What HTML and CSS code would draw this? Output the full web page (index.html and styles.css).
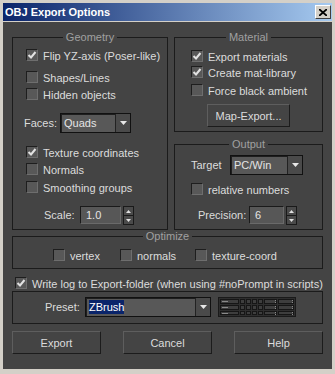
FILE: index.html
```html
<!DOCTYPE html>
<html>
<head>
<meta charset="utf-8">
<link rel="stylesheet" href="styles.css">
</head>
<body>
<div class="window">
  <div class="titlebar">
    <span class="title">OBJ Export Options</span>
    <span class="close"><svg width="8" height="7" viewBox="0 0 8 7"><path d="M0 0 L8 7 M8 0 L0 7" stroke="#000" stroke-width="1.8"/></svg></span>
  </div>
  <div class="client">
    <div class="top">
      <fieldset class="group geometry">
        <legend>Geometry</legend>
        <div class="cb flip"><span class="box on"><svg width="10" height="10" viewBox="0 0 10 10"><path d="M1.5 5 L4 7.5 L8.5 2" fill="none" stroke="#e2e2e2" stroke-width="2"/></svg></span><span class="t">Flip YZ-axis (Poser-like)</span></div>
        <div class="cb shapes"><span class="box"></span><span class="t">Shapes/Lines</span></div>
        <div class="cb hidden"><span class="box"></span><span class="t">Hidden objects</span></div>
        <div class="row faces">
          <span class="lbl faces-lbl">Faces:</span>
          <div class="dd faces-dd"><span class="val">Quads</span><span class="arr"><svg width="7" height="4" viewBox="0 0 7 4"><path d="M0 0 H7 L3.5 4 Z" fill="#e8e8e8"/></svg></span></div>
        </div>
        <div class="cb texture"><span class="box on"><svg width="10" height="10" viewBox="0 0 10 10"><path d="M1.5 5 L4 7.5 L8.5 2" fill="none" stroke="#e2e2e2" stroke-width="2"/></svg></span><span class="t">Texture coordinates</span></div>
        <div class="cb normals"><span class="box"></span><span class="t">Normals</span></div>
        <div class="cb smooth"><span class="box"></span><span class="t">Smoothing groups</span></div>
        <div class="row scale">
          <span class="lbl scale-lbl">Scale:</span>
          <div class="spin"><span class="field scale-field">1.0</span><span class="arrows"><span class="up"><svg width="5" height="3" viewBox="0 0 5 3"><path d="M0 3 H5 L2.5 0 Z" fill="#e0e0e0"/></svg></span><span class="down"><svg width="5" height="3" viewBox="0 0 5 3"><path d="M0 0 H5 L2.5 3 Z" fill="#e0e0e0"/></svg></span></span></div>
        </div>
      </fieldset>
      <div class="rightcol">
        <fieldset class="group material">
          <legend>Material</legend>
          <div class="cb expmat"><span class="box on"><svg width="10" height="10" viewBox="0 0 10 10"><path d="M1.5 5 L4 7.5 L8.5 2" fill="none" stroke="#e2e2e2" stroke-width="2"/></svg></span><span class="t">Export materials</span></div>
          <div class="cb matlib"><span class="box on"><svg width="10" height="10" viewBox="0 0 10 10"><path d="M1.5 5 L4 7.5 L8.5 2" fill="none" stroke="#e2e2e2" stroke-width="2"/></svg></span><span class="t">Create mat-library</span></div>
          <div class="cb force"><span class="box"></span><span class="t">Force black ambient</span></div>
          <div class="btn mapexp">Map-Export...</div>
        </fieldset>
        <fieldset class="group output">
          <legend>Output</legend>
          <div class="row target">
            <span class="lbl target-lbl">Target</span>
            <div class="dd target-dd"><span class="val">PC/Win</span><span class="arr"><svg width="7" height="4" viewBox="0 0 7 4"><path d="M0 0 H7 L3.5 4 Z" fill="#e8e8e8"/></svg></span></div>
          </div>
          <div class="cb relative"><span class="box"></span><span class="t">relative numbers</span></div>
          <div class="row precision">
            <span class="lbl prec-lbl">Precision:</span>
            <div class="spin"><span class="field prec-field">6</span><span class="arrows"><span class="up"><svg width="5" height="3" viewBox="0 0 5 3"><path d="M0 3 H5 L2.5 0 Z" fill="#e0e0e0"/></svg></span><span class="down"><svg width="5" height="3" viewBox="0 0 5 3"><path d="M0 0 H5 L2.5 3 Z" fill="#e0e0e0"/></svg></span></span></div>
          </div>
        </fieldset>
      </div>
    </div>
    <fieldset class="group optimize">
      <legend>Optimize</legend>
      <div class="opt-row">
        <div class="cb o-vertex"><span class="box"></span><span class="t">vertex</span></div>
        <div class="cb o-normals"><span class="box"></span><span class="t">normals</span></div>
        <div class="cb o-tex"><span class="box"></span><span class="t">texture-coord</span></div>
      </div>
    </fieldset>
    <div class="cb writelog"><span class="box on"><svg width="10" height="10" viewBox="0 0 10 10"><path d="M1.5 5 L4 7.5 L8.5 2" fill="none" stroke="#e2e2e2" stroke-width="2"/></svg></span><span class="t">Write log to Export-folder (when using #noPrompt in scripts)</span></div>
    <fieldset class="group preset">
      <div class="row preset-row">
        <span class="lbl preset-lbl">Preset:</span>
        <div class="dd preset-dd"><span class="val"><span class="sel">ZBrush</span></span><span class="arr"><svg width="7" height="4" viewBox="0 0 7 4"><path d="M0 0 H7 L3.5 4 Z" fill="#e8e8e8"/></svg></span></div>
        <svg class="preset-icon" width="78" height="20" viewBox="0 0 78 20">
          <rect x="0.5" y="0.5" width="77" height="19" fill="#2e2e2e" stroke="#1a1a1a"/>
          <g fill="#3e3e3e" stroke="#161616">
            <rect x="2.5" y="2.5" width="18" height="4"/>
            <rect x="2.5" y="8.5" width="18" height="4"/>
            <rect x="2.5" y="14.5" width="18" height="3"/>
            <rect x="22.5" y="2.5" width="4" height="4"/><rect x="28.5" y="2.5" width="4" height="4"/><rect x="34.5" y="2.5" width="4" height="4"/><rect x="40.5" y="2.5" width="4" height="4"/>
            <rect x="22.5" y="8.5" width="4" height="4"/><rect x="28.5" y="8.5" width="4" height="4"/><rect x="34.5" y="8.5" width="4" height="4"/><rect x="40.5" y="8.5" width="4" height="4"/>
            <rect x="22.5" y="14.5" width="4" height="3"/><rect x="28.5" y="14.5" width="4" height="3"/><rect x="34.5" y="14.5" width="4" height="3"/><rect x="40.5" y="14.5" width="4" height="3"/>
            <rect x="46.5" y="2.5" width="12" height="4"/><rect x="46.5" y="8.5" width="12" height="4"/><rect x="46.5" y="14.5" width="12" height="3"/>
            <rect x="60.5" y="2.5" width="15" height="4"/><rect x="60.5" y="8.5" width="15" height="4"/><rect x="60.5" y="14.5" width="15" height="3"/>
          </g>
          <g fill="#8a8a8a">
            <rect x="4" y="4" width="6" height="1"/><rect x="4" y="10" width="6" height="1"/><rect x="4" y="16" width="6" height="1"/>
            <rect x="57" y="3" width="1" height="1"/><rect x="57" y="5" width="1" height="1"/>
            <rect x="57" y="9" width="1" height="1"/><rect x="57" y="11" width="1" height="1"/>
            <rect x="57" y="15" width="1" height="1"/><rect x="57" y="17" width="1" height="1"/>
            <rect x="74" y="3" width="1" height="1"/><rect x="74" y="5" width="1" height="1"/>
            <rect x="74" y="9" width="1" height="1"/><rect x="74" y="11" width="1" height="1"/>
            <rect x="74" y="15" width="1" height="1"/><rect x="74" y="17" width="1" height="1"/>
          </g>
        </svg>
      </div>
    </fieldset>
    <div class="buttons">
      <div class="btn">Export</div>
      <div class="btn">Cancel</div>
      <div class="btn">Help</div>
    </div>
  </div>
</div>
</body>
</html>
```
FILE: styles.css
```css
* { box-sizing: border-box; }
html, body { margin: 0; padding: 0; background: #ffffff; }
body { font-family: "Liberation Sans", Arial, sans-serif; font-size: 11px; }

.window {
  width: 335px; height: 374px;
  background: #d4d0c8;
  padding: 3px 3px 5px 3px;
  display: flex; flex-direction: column;
}
.titlebar {
  height: 18px; margin-bottom: 1px; flex: none;
  background: linear-gradient(to right, #0a246a, #a6caf0);
  display: flex; align-items: center; justify-content: space-between;
  padding: 0 1px 0 2px;
}
.title { color: #fff; font-weight: bold; font-size: 11px; }
.close {
  width: 16px; height: 14px;
  background: #d4d0c8;
  border: 1px solid; border-color: #fff #404040 #404040 #fff;
  display: flex; align-items: center; justify-content: center;
}
.client {
  flex: 1;
  background: #444444;
  padding: 9px 9px 0 9px;
  color: #dcdcdc;
}

fieldset.group { margin: 0; padding: 0; border: 1px solid #1b1b1b; min-width: 0; }
legend { margin: 0 auto; padding: 0 3px; height: 13px; line-height: 13px; color: #a0a0a0; }

.top { display: grid; grid-template-columns: 156px 149px; column-gap: 6px; }
.geometry { height: 199px; }
.rightcol { display: flex; flex-direction: column; gap: 6px; }
.material { height: 101px; }
.output { height: 92px; }

/* checkbox rows */
.cb { display: flex; height: 17px; white-space: nowrap; }
.box {
  width: 12px; height: 12px; margin-top: 3px; margin-right: 5px; flex: none;
  background: #585858;
  border: 1px solid; border-color: #1e1e1e #6e6e6e #6e6e6e #1e1e1e;
  display: flex; align-items: center; justify-content: center;
}
.t { line-height: 17px; padding-top: 2px; }

.row { display: flex; align-items: center; white-space: nowrap; }
.lbl { flex: none; }

/* dropdown */
.dd {
  display: flex; height: 20px;
  border: 1px solid #111111;
  box-shadow: inset 1px 1px 0 #1e1e1e;
  background: #585858;
}
.dd .val { flex: 1; padding-left: 3px; line-height: 18px; color: #e4e4e4; overflow: hidden; }
.dd .arr {
  width: 15px; flex: none;
  border-left: 1px solid #222;
  background: #4a4a4a;
  display: flex; align-items: center; justify-content: center;
}

/* spinner */
.spin { display: flex; gap: 2px; height: 18px; }
.field {
  height: 18px;
  border: 1px solid; border-color: #1a1a1a #6a6a6a #6a6a6a #1a1a1a;
  background: #575757;
  padding-left: 5px; line-height: 16px; color: #e4e4e4;
}
.arrows { width: 11px; height: 19px; display: flex; flex-direction: column; border: 1px solid #1a1a1a; background: #4a4a4a; }
.arrows span { flex: 1; display: flex; align-items: center; justify-content: center; }
.arrows .up { border-bottom: 1px solid #1a1a1a; }

/* buttons */
.btn {
  height: 23px;
  border: 1px solid; border-color: #5e5e5e #1c1c1c #1c1c1c #5e5e5e;
  background: #444444;
  color: #dcdcdc;
  display: flex; align-items: center; justify-content: center;
}

/* geometry */
.geometry .cb { margin-left: 13px; }
.flip { margin-top: 2px; }
.shapes { margin-top: 5px; }
.faces { margin-top: 11px; margin-left: 11px; height: 20px; }
.faces-lbl { width: 36px; }
.faces-dd { width: 71px; }
.texture { margin-top: 10px; }
.smooth { margin-top: 1px; }
.scale { margin-top: 11px; margin-left: 31px; height: 18px; }
.scale-lbl { width: 36px; }
.scale-field { width: 41px; }

/* material */
.material .cb { margin-left: 16px; }
.expmat { margin-top: 3px; }
.matlib { margin-top: -1px; }
.force { margin-top: 1px; }
.mapexp { width: 83px; margin-left: 32px; margin-top: 6px; }

/* output */
.target { margin-top: 4px; margin-left: 16px; height: 20px; }
.target-lbl { width: 39px; }
.target-dd { width: 73px; }
.relative { margin-top: 5px; margin-left: 16px; }
.precision { margin-top: 9px; margin-left: 23px; height: 18px; }
.prec-lbl { width: 51px; }
.prec-field { width: 35px; }

/* optimize */
.optimize { margin-top: 6px; height: 39px; }
.opt-row { display: flex; margin-top: 3px; margin-left: 40px; }
.o-vertex { width: 67px; }
.o-normals { width: 75px; }

/* write log */
.writelog { margin-top: 5px; margin-left: 3px; }

/* preset */
.preset { margin-top: 4px; height: 33px; }
.preset-row { margin-top: 5px; margin-left: 32px; height: 20px; }
.preset-lbl { width: 40px; }
.preset-dd { width: 126px; margin-right: 7px; }
.sel { background: #0a246a; color: #fff; padding: 1px 0; }
.preset-icon { display: block; flex: none; }

.buttons { display: flex; gap: 22px; margin-top: 7px; }
.buttons .btn { width: 89px; }
```
